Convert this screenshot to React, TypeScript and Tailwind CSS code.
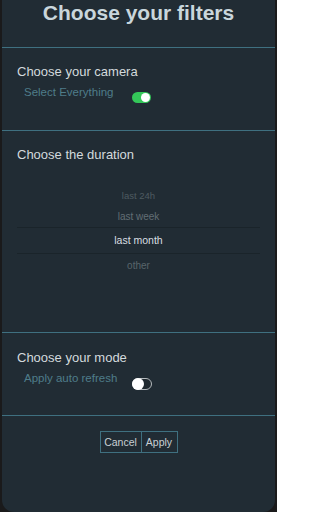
import React from "react";

const font = { fontFamily: '"Liberation Sans", Arial, sans-serif' };

function ToggleOn() {
  return (
    <div className="relative h-[11px] w-[19px] rounded-full bg-[#34c759]">
      <div className="absolute right-[1px] top-[1px] h-[9px] w-[9px] rounded-full bg-white" />
    </div>
  );
}

function ToggleOff() {
  return (
    <div className="relative h-[12px] w-[20px] rounded-full border border-[#b5babd] bg-[#20292f]">
      <div className="absolute left-[-1px] top-[-1px] h-[12px] w-[12px] rounded-full bg-white" />
    </div>
  );
}

export default function App() {
  return (
    <div className="h-[512px] w-[277px] bg-[#1a1a1b] px-[2px]" style={font}>
      <div className="flex h-full flex-col overflow-hidden rounded-b-[12px] bg-[#212c34]">
        <div className="h-[48px] shrink-0 border-b border-[#3f7080] text-center">
          <h1 className="text-[21px] font-bold leading-[26px] text-[#c9d6dc]">Choose your filters</h1>
        </div>

        <div className="h-[83px] shrink-0 border-b border-[#3f7080] pl-[15px] pt-[15px]">
          <div className="text-[13px] leading-[17px] text-[#d3dadd]">Choose your camera</div>
          <div className="mt-[5px] flex items-start gap-[18px] pl-[7px]">
            <span className="text-[11.5px] leading-[15px] text-[#4f7d8a]">Select Everything</span>
            <div className="mt-[7px]">
              <ToggleOn />
            </div>
          </div>
        </div>

        <div className="h-[202px] shrink-0 border-b border-[#3f7080] pt-[15px]">
          <div className="pl-[15px] text-[13px] leading-[17px] text-[#d3dadd]">Choose the duration</div>
          <div className="mx-[15px] mt-[23px] flex flex-col text-center">
            <div className="flex h-[20px] items-center justify-center text-[9.5px] text-[#4e5b61]">last 24h</div>
            <div className="flex h-[21px] items-center justify-center text-[10px] text-[#616e74]">last week</div>
            <div className="flex h-[27px] items-center justify-center border-y border-[#1a242a] text-[10.5px] text-[#d9dfe2]">
              last month
            </div>
            <div className="flex h-[22px] items-center justify-center text-[10px] text-[#58656b]">other</div>
          </div>
        </div>

        <div className="h-[83px] shrink-0 border-b border-[#3f7080] pl-[15px] pt-[16px]">
          <div className="text-[13px] leading-[17px] text-[#d3dadd]">Choose your mode</div>
          <div className="mt-[5px] flex items-start gap-[15px] pl-[7px]">
            <span className="text-[11.5px] leading-[15px] text-[#4f7d8a]">Apply auto refresh</span>
            <div className="mt-[7px]">
              <ToggleOff />
            </div>
          </div>
        </div>

        <div className="flex justify-center pt-[15px]">
          <div className="flex h-[22px] border border-[#3f7080] text-[10.5px] text-[#c8d0d4]">
            <button className="w-[41px] border-r border-[#3f7080] leading-[20px]">Cancel</button>
            <button className="w-[35px] leading-[20px]">Apply</button>
          </div>
        </div>
      </div>
    </div>
  );
}
